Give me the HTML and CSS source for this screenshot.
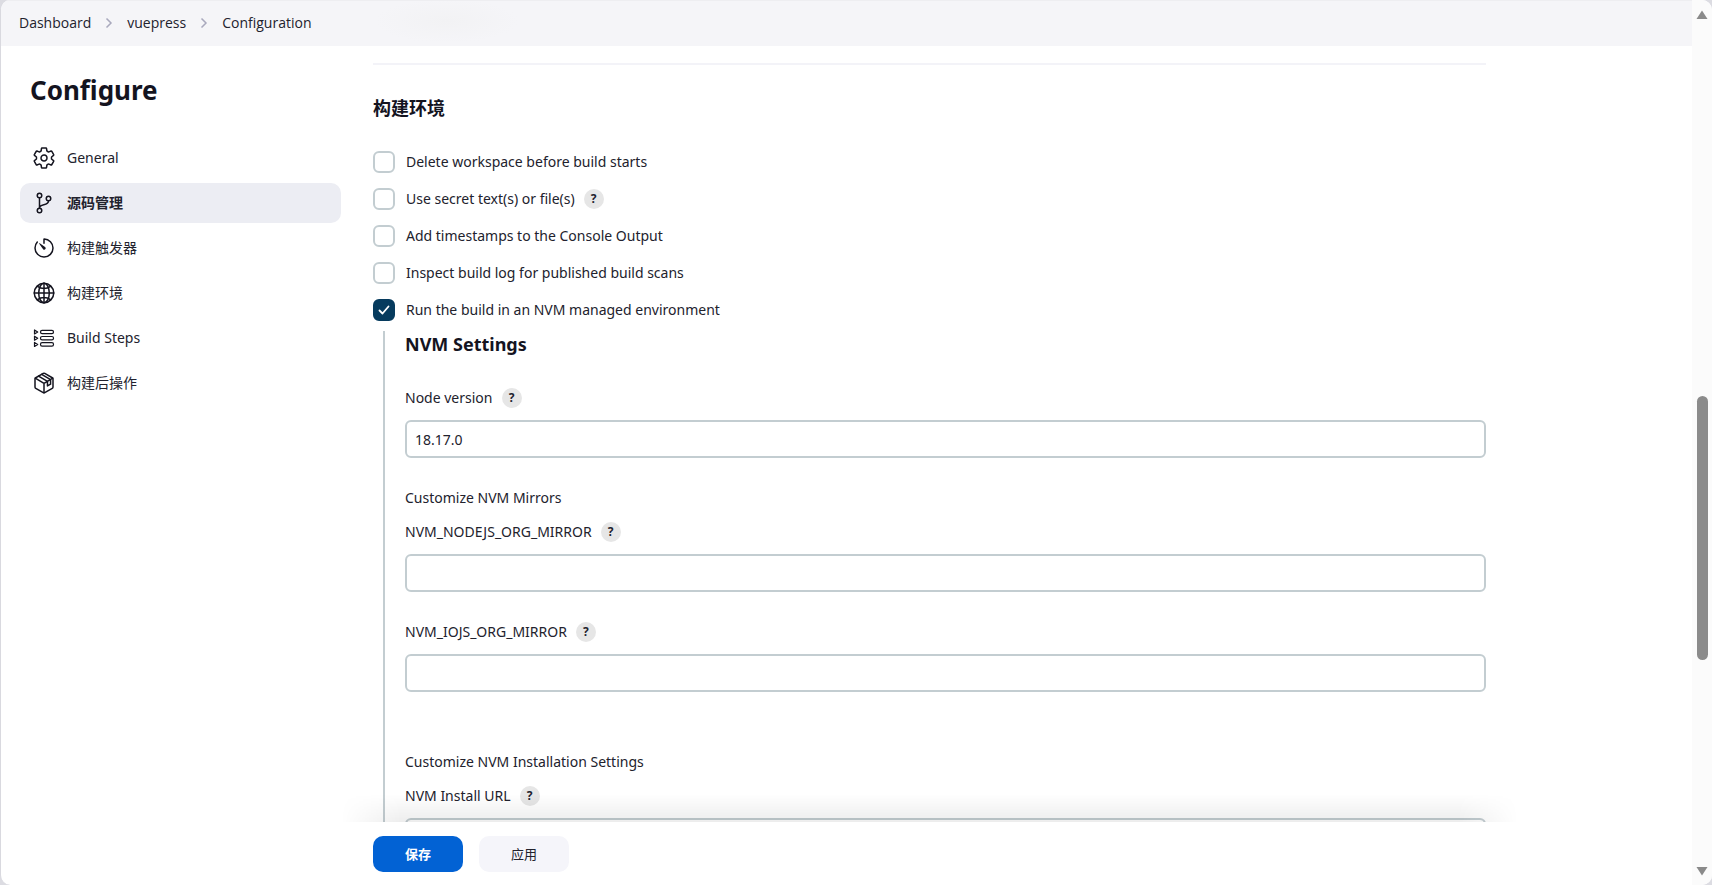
FILE: index.html
```html
<!DOCTYPE html>
<html lang="zh-CN">
<head>
<meta charset="utf-8">
<title>Configuration</title>
<link rel="stylesheet" href="styles.css">
</head>
<body>
<div class="window">
  <div class="page">
    <nav class="breadcrumbs" aria-label="Breadcrumb">
      <a href="#">Dashboard</a>
      <svg class="chevron" viewBox="0 0 8 12"><path d="M1.500 1.500 6 6 1.500 10.500"/></svg>
      <a href="#">vuepress</a>
      <svg class="chevron" viewBox="0 0 8 12"><path d="M1.500 1.500 6 6 1.500 10.500"/></svg>
      <a href="#">Configuration</a>
    </nav>
    <div class="body">
      <aside class="sidebar">
        <h1>Configure</h1>
        <nav class="tasks">
          <a class="task" href="#">
            <svg class="icon" viewBox="0 0 512 512"><path d="M262.290 192.310a64 64 0 1057.400 57.400 64.130 64.130 0 00-57.400-57.400zM416.390 256a154.340 154.340 0 01-1.530 20.790l45.210 35.460a10.810 10.810 0 012.450 13.750l-42.770 74a10.810 10.810 0 01-13.140 4.590l-44.900-18.080a16.110 16.110 0 00-15.170 1.750A164.480 164.480 0 01325 400.800a15.940 15.940 0 00-8.820 12.140l-6.730 47.890a11.080 11.080 0 01-10.680 9.170h-85.540a11.110 11.110 0 01-10.690-8.870l-6.720-47.820a16.070 16.070 0 00-9-12.220 155.300 155.300 0 01-21.460-12.570 16 16 0 00-15.110-1.710l-44.890 18.070a10.810 10.810 0 01-13.140-4.580l-42.770-74a10.800 10.800 0 012.450-13.750l38.210-30a16.050 16.050 0 006-14.080c-.360-4.170-.580-8.330-.580-12.500s.210-8.270.580-12.350a16 16 0 00-6.070-13.940l-38.190-30A10.810 10.810 0 0149.480 186l42.770-74a10.810 10.810 0 0113.140-4.590l44.900 18.080a16.110 16.110 0 0015.170-1.750A164.480 164.480 0 01187 111.200a15.940 15.940 0 008.820-12.140l6.730-47.890A11.080 11.080 0 01213.230 42h85.540a11.110 11.110 0 0110.690 8.870l6.720 47.820a16.070 16.070 0 009 12.220 155.300 155.300 0 0121.460 12.570 16 16 0 0015.110 1.710l44.890-18.070a10.810 10.810 0 0113.140 4.580l42.770 74a10.800 10.800 0 01-2.450 13.750l-38.210 30a16.050 16.050 0 00-6.050 14.080c.330 4.140.550 8.300.550 12.470z"/></svg>
            General
          </a>
          <a class="task active" href="#" aria-current="page">
            <svg class="icon" viewBox="0 0 512 512"><circle cx="160" cy="96" r="48"/><circle cx="160" cy="416" r="48"/><circle cx="352" cy="160" r="48"/><path d="M160 368V144M352 208c0 128-192 48-192 160"/></svg>
            源码管理
          </a>
          <a class="task" href="#">
            <svg class="icon" viewBox="0 0 512 512"><path d="M112.910 128A191.850 191.850 0 0064 254c-1.180 106.350 85.650 193.800 192 194 106.200.200 192-85.830 192-192 0-104.540-83.550-189.610-187.500-192a4.360 4.360 0 00-4.500 4.370V152"/><path class="solid" d="M233.380 278.630l-79-113a8.130 8.130 0 0111.320-11.320l113 79a32.500 32.500 0 01-37.250 53.260 33.210 33.210 0 01-8.070-7.940z"/></svg>
            构建触发器
          </a>
          <a class="task" href="#">
            <svg class="icon" viewBox="0 0 512 512"><circle cx="256" cy="256" r="208"/><ellipse cx="256" cy="256" rx="113" ry="208"/><path d="M117 117c38 27 86 44 139 44s101-17 139-44M395 395c-38-27-86-44-139-44s-101 17-139 44M256 48v416M464 256H48"/></svg>
            构建环境
          </a>
          <a class="task" href="#">
            <svg class="icon thin" viewBox="0 0 24 24"><path d="M2.500 4v4L5.700 6zM2.500 10.200v4l3.200-2zM2.500 16.400v4l3.200-2z"/><rect x="8.500" y="4.300" width="13" height="3.400" rx="1.600"/><rect x="8.500" y="10.500" width="13" height="3.400" rx="1.600"/><rect x="8.500" y="16.700" width="13" height="3.400" rx="1.600"/></svg>
            Build Steps
          </a>
          <a class="task" href="#">
            <svg class="icon" viewBox="0 0 512 512"><path d="M448 341V171a32 32 0 00-16-27L272 52a32 32 0 00-32 0L80 144a32 32 0 00-16 27v170a32 32 0 0016 28l160 91a32 32 0 0032 0l160-91a32 32 0 0016-28z"/><path d="M69 154l187 110 187-110M256 463V264M140 110l190 112v96l66-38v-94L206 72"/></svg>
            构建后操作
          </a>
        </nav>
      </aside>
      <main class="main">
        <form class="form">
          <div class="scroller">
            <hr>
            <h2>构建环境</h2>
            <div class="options">
              <div class="option"><label><input type="checkbox">Delete workspace before build starts</label></div>
              <div class="option"><label><input type="checkbox">Use secret text(s) or file(s)</label><button type="button" class="help" aria-label="Help">?</button></div>
              <div class="option"><label><input type="checkbox">Add timestamps to the Console Output</label></div>
              <div class="option"><label><input type="checkbox">Inspect build log for published build scans</label></div>
              <div class="option"><label><input type="checkbox" checked>Run the build in an NVM managed environment</label></div>
            </div>
            <section class="nested">
              <h3>NVM Settings</h3>
              <div class="field">
                <div class="field-label"><label for="node">Node version</label><button type="button" class="help" aria-label="Help">?</button></div>
                <input class="text" id="node" type="text" value="18.17.0">
              </div>
              <p class="group">Customize NVM Mirrors</p>
              <div class="field">
                <div class="field-label"><label for="nodejs">NVM_NODEJS_ORG_MIRROR</label><button type="button" class="help" aria-label="Help">?</button></div>
                <input class="text" id="nodejs" type="text">
              </div>
              <div class="field">
                <div class="field-label"><label for="iojs">NVM_IOJS_ORG_MIRROR</label><button type="button" class="help" aria-label="Help">?</button></div>
                <input class="text" id="iojs" type="text">
              </div>
              <p class="group spaced">Customize NVM Installation Settings</p>
              <div class="field">
                <div class="field-label"><label for="url">NVM Install URL</label><button type="button" class="help" aria-label="Help">?</button></div>
                <input class="text" id="url" type="text">
              </div>
            </section>
          </div>
          <div class="actions">
            <button type="submit" class="button primary">保存</button>
            <button type="button" class="button">应用</button>
          </div>
        </form>
      </main>
    </div>
  </div>
  <div class="scrollbar" aria-hidden="true">
    <svg class="arrow" viewBox="0 0 12 10"><path d="M6 .500 11.500 9H.500z"/></svg>
    <div class="track"><div class="thumb"></div></div>
    <svg class="arrow" viewBox="0 0 12 10"><path d="M6 9.500 11.500 1H.500z"/></svg>
  </div>
</div>
</body>
</html>
```

FILE: styles.css
```css
* { box-sizing: border-box; }

body {
  margin: 0;
  height: 100vh;
  overflow: hidden;
  background: #dcdce2;
  color: #22222d;
  font-family: "Noto Sans", "Noto Sans CJK SC", sans-serif;
  font-size: 14px;
  line-height: 20px;
}

h1, h2, h3, p { margin: 0; }
h1, h2, h3 { color: #14141f; }
a { color: inherit; text-decoration: none; }
button, input { font: inherit; color: inherit; }

.window {
  display: flex;
  height: 100vh;
  overflow: hidden;
  border-left: 1px solid #d9d9df;
  border-radius: 10px;
  background: #fff;
}

.page {
  flex: 1;
  min-width: 0;
  display: flex;
  flex-direction: column;
}

.breadcrumbs {
  flex: none;
  display: flex;
  align-items: center;
  height: 46px;
  padding: 0 0 2px 18px;
  border-top: 1px solid #eeeef1;
  background: radial-gradient(ellipse 72px 22px at 446px 20px, #f2f2f4, #f5f5f8) #f5f5f8;
  font-family: "Open Sans", "Noto Sans", sans-serif;
}

.chevron {
  width: 8px;
  height: 12px;
  margin: 0 14px;
  fill: none;
  stroke: #a9a9bd;
  stroke-width: 1.500;
}

.body {
  flex: 1;
  min-height: 0;
  display: flex;
}

.sidebar {
  flex: none;
  width: 340px;
  padding: 26px 0 0 19px;
}

.sidebar h1 {
  padding-left: 10px;
  font-size: 26px;
  line-height: 36px;
  font-weight: 700;
}

.tasks {
  display: flex;
  flex-direction: column;
  gap: 5px;
  margin-top: 30px;
}

.task {
  display: flex;
  align-items: center;
  gap: 11px;
  height: 40px;
  padding-left: 12px;
  border-radius: 10px;
}

.task.active {
  background: #ecedf3;
  font-weight: 600;
}

.icon {
  width: 24px;
  height: 24px;
  fill: none;
  stroke: #14141f;
  stroke-width: 32;
  stroke-linecap: round;
  stroke-linejoin: round;
}

.icon.thin { stroke-width: 1.200; }
.icon .solid { fill: #14141f; stroke: none; }

.main {
  flex: 1;
  min-width: 0;
  padding: 0 206px 0 32px;
}

.form {
  height: 100%;
  display: flex;
  flex-direction: column;
}

.scroller {
  flex: 1;
  min-height: 0;
  overflow: hidden;
  padding-top: 17px;
}

hr {
  height: 2px;
  margin: 0;
  border: 0;
  background: #f3f3f8;
}

h2 {
  margin-top: 31px;
  font-size: 18px;
  line-height: 24px;
}

.options {
  display: flex;
  flex-direction: column;
  gap: 15px;
  margin-top: 31px;
}

.option {
  display: flex;
  align-items: center;
  gap: 9px;
  height: 22px;
}

.option label {
  display: flex;
  align-items: center;
  gap: 11px;
}

.option input {
  appearance: none;
  width: 22px;
  height: 22px;
  margin: 0;
  border: 2px solid #c3cdd1;
  border-radius: 6px;
  background: #fff;
}

.option input:checked {
  border-color: #063b5e;
  background: #063b5e url("data:image/svg+xml,%3Csvg xmlns='http://www.w3.org/2000/svg' viewBox='0 0 18 18'%3E%3Cpath d='M4.500 9.500 7.500 12.500 13.500 5.500' fill='none' stroke='white' stroke-width='1.800' stroke-linecap='round' stroke-linejoin='round'/%3E%3C/svg%3E");
}

.help {
  width: 20px;
  height: 20px;
  padding: 0;
  border: 0;
  border-radius: 50%;
  background: #e6e6e6;
  font-size: 12px;
  line-height: 20px;
  font-weight: 700;
  text-align: center;
}

.nested {
  margin: 10px 0 0 10px;
  padding-left: 20px;
  border-left: 2px solid #c3cdd1;
}

h3 {
  margin-bottom: 31px;
  font-size: 18px;
  line-height: 26px;
}

.field { margin-bottom: 30px; }

.field-label {
  display: flex;
  align-items: center;
  gap: 9px;
  margin-bottom: 12px;
}

.text {
  display: block;
  width: 100%;
  height: 38px;
  padding: 0 8px;
  border: 2px solid #c3cdd1;
  border-radius: 6px;
  background: #fff;
}

.group { margin-bottom: 14px; }
.group.spaced { margin-top: 60px; }

.actions {
  position: relative;
  flex: none;
  display: flex;
  gap: 16px;
  height: 63px;
  padding-top: 14px;
}

.actions::before {
  content: "";
  position: absolute;
  inset: -28px -32px 100%;
  background: linear-gradient(to top, #00000012, #0000);
  mask: linear-gradient(to right, transparent, #000 60px calc(100% - 60px), transparent);
}

.button {
  width: 90px;
  height: 36px;
  padding: 0;
  border: 0;
  border-radius: 10px;
  background: #f5f5fa;
  font-size: 13px;
}

.button.primary {
  background: #0262d4;
  color: #fff;
  font-weight: 700;
}

.scrollbar {
  flex: none;
  display: flex;
  flex-direction: column;
  align-items: center;
  width: 20px;
  padding: 10px 0 9px;
  background: #fbfbfb;
}

.arrow {
  width: 12px;
  height: 10px;
  fill: #8a8a8a;
}

.track {
  flex: 1;
  display: grid;
  grid-template-rows: 444fr 313fr 243fr;
}

.thumb {
  grid-row: 2;
  width: 11px;
  border-radius: 6px;
  background: #8b8b8b;
}
```
